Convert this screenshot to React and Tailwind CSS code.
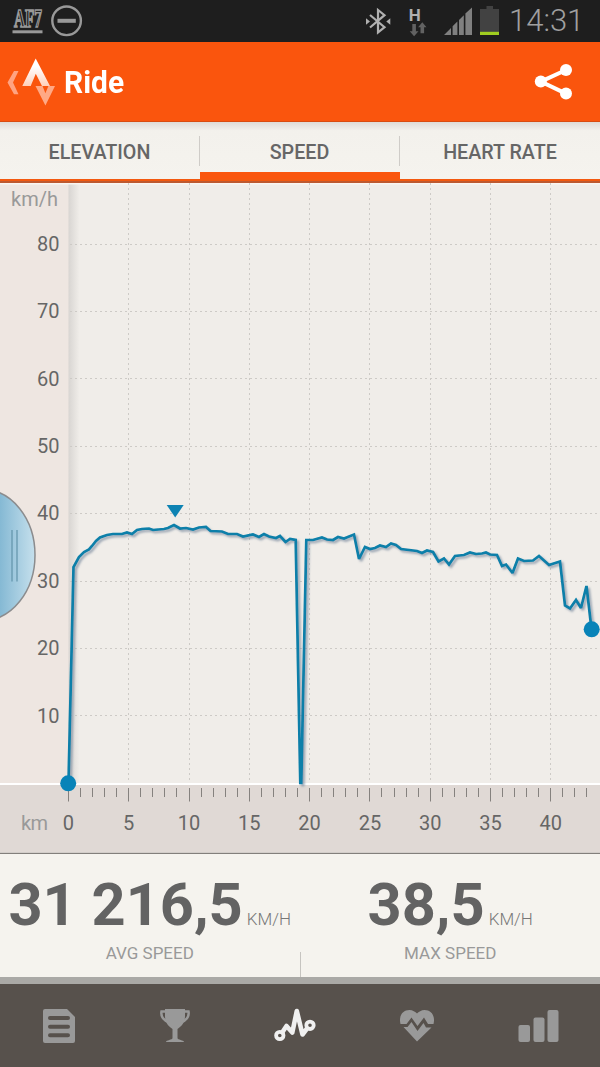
const TOP = 183;
const X0 = 68.4;
const KM = 12.06;
const Y0 = 783.2;
const STEP = 67.4;

const speedPoints =
  '68.5,783 73.5,567 79,557 84,552 89,549.5 92,546 96,541 100,537.5 107,535 113,534 122,534 127,532.5 132,534 137,530 142,529 149,528.5 153,530 164,529 168,528 174,525 180,528.5 186,528 193,529.5 199,527.5 206,527 210.5,531 222,531.5 228,534 237,534 243,536.5 253,534.5 259,537 264,534 269,536.5 276,538 280,536 285.5,542 290,539 295.7,540 300.3,783 301.3,783 306.3,540 313,540 322,537.5 327,539.5 333,540 338,537 344,538.5 354,534.5 359,559 365,547 370,549 375,548 380,545.5 386,547 391,543.5 396,545 401,549 417,551 422,553 427,550.5 433,552 438.5,561.5 444,558.5 449,564.5 455,556 464,555 470,552.5 476,554 482,553.5 486,552.5 490,554.5 497,555 502,566 506,564.5 512.5,573 518,558.5 524,561 533,560.5 539,556 549,565 560,561.5 565,605.5 570,608.5 576,600 581,608 586.5,586 591.5,629';

const tabs = ['ELEVATION', 'SPEED', 'HEART RATE'];

function StatusBar() {
  return (
    <div className="flex h-[42px] items-center bg-[#1e1e1e] pl-3 pr-[19px]">
      <svg width="72" height="42" viewBox="12 0 72 42">
        <text x="14" y="26.5" fontSize="25" fontWeight="700" fontFamily="Liberation Serif, serif" fill="#1e1e1e" stroke="#999" strokeWidth="1.6" textLength="28" lengthAdjust="spacingAndGlyphs">AF7</text>
        <rect x="12.5" y="30.3" width="30" height="3" fill="#999" />
        <circle cx="66.6" cy="20.8" r="14.3" fill="none" stroke="#999" strokeWidth="2.4" />
        <rect x="57.5" y="18.8" width="18.3" height="4" fill="#999" />
      </svg>
      <svg className="ml-auto" width="140" height="42" viewBox="362 0 140 42">
        <path d="M370 15l14.5 12.2-6.5 5.3V10l6.5 5.2L370 27.500" fill="none" stroke="#b0b0b0" strokeWidth="2.2" />
        <path d="M366 18.3l4 3.2-4 3.2zM390.3 18.3l-4 3.2 4 3.2z" fill="#b0b0b0" />
        <text x="408.8" y="20.5" fontSize="17" fontWeight="700" fontFamily="Roboto, sans-serif" fill="#b0b0b0">H</text>
        <path d="M412.3 24h3.6v7.3h2.6l-4.4 5-4.4-5h2.6zM420.5 33.3h3.6v-6h2.4l-4.2-5-4.2 5h2.4z" fill="#626262" />
        <path d="M444 35l7-7v7zM452.600 26.2l4.800-4.600V35h-4.800zM459 20l4.8-4.8V35H459zM465.4 13.600l6.600-6V35h-6.600z" fill="#808080" />
        <path d="M486.5 6h6.5v3h6v23h-19V9h6.5z" fill="#424242" />
        <rect x="480" y="31.8" width="19" height="3.2" fill="#a0cd20" />
      </svg>
      <span className="ml-[7px] w-[72px] whitespace-nowrap text-[31px] font-light leading-[42px] text-[#a0a0a0]">14:31</span>
    </div>
  );
}

function Header() {
  return (
    <header className="flex h-20 items-center border-b border-[#d94c10] bg-[#fa550d] pl-[6px] pr-[26px]">
      <svg width="51" height="50" viewBox="6 56 51 50">
        <defs>
          <linearGradient id="peak" x1="0" y1="0" x2="0" y2="1">
            <stop offset="0.3" stopColor="#fff" />
            <stop offset="1" stopColor="#ffd0ba" />
          </linearGradient>
        </defs>
        <path d="M14 70h4.5l-5.5 11.5 5.5 11.7H14L7.5 81.5z" fill="#ffa381" />
        <path d="M35.7 57.5L50 85h-8l-6.2-12.2L30.7 85H22.3z" fill="url(#peak)" />
        <path d="M35.5 85h7l2.9 7.2 3-7.2H55l-9.6 19.5z" fill="#ffa985" />
      </svg>
      <h1 className="ml-[7px] pt-[3px] text-[31px] font-bold leading-10 text-white">
        <span className="inline-block origin-left scale-x-[0.965]">Ride</span>
      </h1>
      <svg className="ml-auto" width="40" height="40" viewBox="534 62 40 40">
        <path d="M566 70l-25.2 11.6L566 93.6" fill="none" stroke="#fff" strokeWidth="4" />
        <circle cx="566" cy="70" r="6" fill="#fff" />
        <circle cx="540.8" cy="81.6" r="6" fill="#fff" />
        <circle cx="566" cy="93.6" r="6" fill="#fff" />
      </svg>
    </header>
  );
}

function Tabs() {
  return (
    <div className="border-b-2 border-[#bd5930]">
      <nav className="flex h-[59px] border-b-2 border-[#f3590f] bg-gradient-to-b from-[#dedbd7] via-[#f3f1ec] via-15% to-[#f5f3ee]">
        {tabs.map((tab) => (
          <div
            key={tab}
            className={
              tab === 'SPEED'
                ? 'flex flex-1 items-start border-b-[7px] border-[#fa550d]'
                : 'flex flex-1 items-start'
            }
          >
            <span className="flex-1 pt-[16px] text-center text-[19.7px] font-medium leading-[30px] text-[#666]">{tab}</span>
            {tab !== 'HEART RATE' && <div className="mt-[14px] h-[30px] w-px bg-[#cfccc8]" />}
          </div>
        ))}
      </nav>
    </div>
  );
}

function SpeedChart() {
  const ticks = Array.from({ length: 44 }, (_, i) => i);
  const rows = [10, 20, 30, 40, 50, 60, 70, 80];
  const cols = [0, 5, 10, 15, 20, 25, 30, 35, 40];

  return (
    <svg className="block" width="600" height="671" viewBox={`0 ${TOP} 600 671`} fontFamily="Roboto, sans-serif" fontSize="20" fill="#666">
      <defs>
        <linearGradient id="edge">
          <stop offset="0" stopColor="#d8d5d2" />
          <stop offset="1" stopColor="#f0ede9" />
        </linearGradient>
        <linearGradient id="handle" gradientUnits="userSpaceOnUse" x1="0" y1="0" x2="34" y2="0">
          <stop offset="0" stopColor="#85b9d4" />
          <stop offset="1" stopColor="#c4dfec" />
        </linearGradient>
        <filter id="shadow" x="-5%" y="-5%" width="110%" height="110%">
          <feDropShadow dx="2" dy="2" stdDeviation="1" floodColor="#536b85" floodOpacity="0.55" />
        </filter>
      </defs>

      <rect y={TOP} width="600" height="602" fill="#f0ede9" />
      <rect y={TOP} width="69" height="602" fill="#eee6e1" />
      <rect x="68.5" y={TOP} width="11" height="602" fill="url(#edge)" />
      <rect y={TOP} width="600" height="1.5" fill="#faf5f1" />

      <g stroke="#cdcac6" strokeDasharray="2 3">
        {rows.map((v) => (
          <line key={v} x1="70" x2="600" y1={Math.floor(Y0 - (v / 10) * STEP) + 0.5} y2={Math.floor(Y0 - (v / 10) * STEP) + 0.5} />
        ))}
        {cols.slice(1).map((v) => (
          <line key={v} y1={TOP} y2="783" x1={Math.floor(X0 + v * KM) + 0.5} x2={Math.floor(X0 + v * KM) + 0.5} />
        ))}
      </g>

      <text x="11" y="206" fill="#999" textLength="47">km/h</text>
      {rows.map((v) => (
        <text key={v} x="59.5" y={Y0 - (v / 10) * STEP + 6.8} textAnchor="end">{v}</text>
      ))}

      <ellipse cx="-17" cy="555" rx="52" ry="65.5" fill="url(#handle)" stroke="#8b8c8e" strokeWidth="1.5" />
      <path d="M12 530v51.5M17 530v51.5" stroke="#6293aa" strokeWidth="1.2" />

      <rect y="785" width="600" height="67" fill="#e0d9d5" />
      <rect y="783" width="600" height="2" fill="#fff" />
      <rect y="852" width="600" height="1" fill="#d2cdc9" />
      <rect y="853" width="600" height="1" fill="#827f7b" />
      {ticks.map((k) => (
        <line
          key={k}
          x1={Math.floor(X0 + k * KM) + 0.5}
          x2={Math.floor(X0 + k * KM) + 0.5}
          y1="788"
          y2={k % 5 === 0 ? 801.5 : 797}
          stroke="#85817e"
        />
      ))}
      <text x="21" y="830" fill="#999" textLength="27">km</text>
      {cols.map((v) => (
        <text key={v} x={X0 + v * KM} y="830" textAnchor="middle">{v}</text>
      ))}

      <polyline points={speedPoints} fill="none" stroke="#087fa9" strokeWidth="2.7" strokeLinejoin="miter" strokeMiterlimit="2" filter="url(#shadow)" />
      <path d="M166.7 505h17L175.2 517.5z" fill="#0e83b3" />
      <circle cx="68.2" cy="783.3" r="8" fill="#0883b8" />
      <circle cx="591.7" cy="629.3" r="8" fill="#0883b8" />
    </svg>
  );
}

function Stat({ value, label }) {
  return (
    <div className="flex flex-1 flex-col items-center pt-[14px]">
      <div className="flex h-[75px] items-baseline whitespace-nowrap leading-[74px] text-[#636363]">
        <span className="text-[59.5px] font-bold">{value}</span>
        <span className="ml-1 text-[17px] font-light leading-5 text-[#777]">KM/H</span>
      </div>
      <div className="text-[17px] leading-5 text-[#999]">{label}</div>
    </div>
  );
}

function BottomNav() {
  return (
    <nav className="flex h-[90px] items-center border-t-[7px] border-[#aaa9a6] bg-[#57514c]">
      <svg width="600" height="83" viewBox="0 984 600 83" fill="#999">
        <path d="M45 1009h22l8 8v24q0 2-2 2H45q-2 0-2-2v-30q0-2 2-2z" />
        <path d="M50 1018h18M50 1026.8h18M50 1035.2h18" stroke="#57514c" strokeWidth="4" strokeLinecap="round" />
        <path d="M165 1009h20v7c0 6-3 10-7.5 13v9c0 2 6.5 2 6.5 4h-18c0-2 6.5-2 6.5-4v-9c-4.500-3-7.500-7-7.500-13z" />
        <path d="M166 1011.500h-4.500c-1 5 3 10 8 11M184 1011.500h4.500c1 5-3 10-8 11" fill="none" stroke="#999" strokeWidth="2.500" />
        <g fill="none" stroke="#f0f0f0" strokeLinejoin="round" strokeLinecap="round">
          <circle cx="279.8" cy="1035.500" r="3.700" strokeWidth="3.800" />
          <circle cx="310" cy="1025.300" r="3.700" strokeWidth="3.800" />
          <path d="M282.500 1032l4-6 5.800 6.500 4.500-21.500 5.700 23.500 4.500-6" strokeWidth="4.600" />
        </g>
        <path d="M400.500 1024c-2-8 2-14 9-14 3 0 6 2 7.500 3.500 1.500-1.500 4.500-3.500 7.500-3.500 7 0 11 6 9 14h-5.500l-4-6.500-6.500 8.500-6-8.500-5 6.500zM403.500 1027h4l4-5 6 9 6-8 2.500 4.500h5.500L417 1041.500z" />
        <rect x="518.500" y="1025" width="11.500" height="17" rx="2" />
        <rect x="533.500" y="1017.500" width="11" height="24.500" rx="2" />
        <rect x="547.500" y="1010" width="11" height="32" rx="2" />
      </svg>
    </nav>
  );
}

export default function App() {
  return (
    <main className="w-[600px] overflow-hidden bg-[#f5f3ee] font-['Roboto',sans-serif]">
      <StatusBar />
      <Header />
      <Tabs />
      <SpeedChart />
      <section className="flex h-[123px] items-end bg-[#f5f3ee]">
        <div className="flex h-full flex-1">
          <Stat value="31 216,5" label="AVG SPEED" />
        </div>
        <div className="h-[25px] w-px bg-[#c6c4c0]" />
        <div className="flex h-full flex-1">
          <Stat value="38,5" label="MAX SPEED" />
        </div>
      </section>
      <BottomNav />
    </main>
  );
}
